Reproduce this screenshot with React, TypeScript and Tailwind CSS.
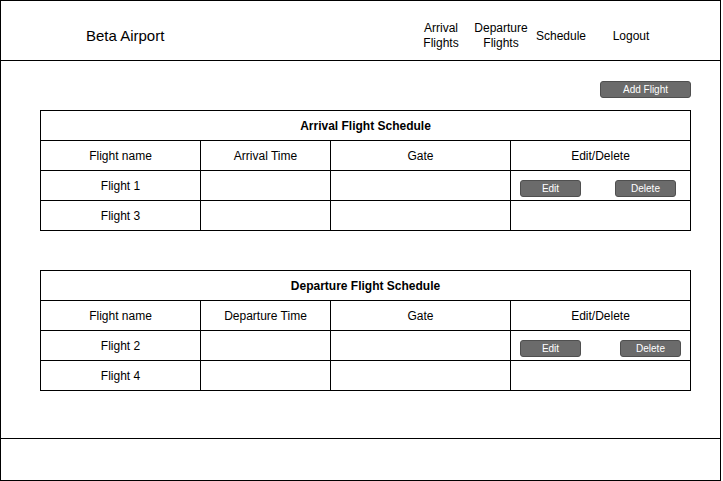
const font = { fontFamily: '"Liberation Sans", Arial, sans-serif' }

type Row = { name: string; actions: boolean }

function SmallButton({ label, className }: { label: string; className?: string }) {
    return (
        <button
            type="button"
            className={`h-[17px] rounded-[3px] border border-[#4f4f4f] bg-[#6b6b6b] pt-[1px] text-[10px] leading-none text-white ${className ?? ""}`}
        >
            {label}
        </button>
    )
}

function ScheduleTable({
    title,
    timeLabel,
    rows,
    deleteMargin,
}: {
    title: string
    timeLabel: string
    rows: Row[]
    deleteMargin: string
}) {
    return (
        <table className="w-[651px] table-fixed border-collapse text-[12px] text-black">
            <colgroup>
                <col className="w-[160px]" />
                <col className="w-[130px]" />
                <col className="w-[180px]" />
                <col className="w-[180px]" />
            </colgroup>
            <tbody>
                <tr className="h-[30px]">
                    <td colSpan={4} className="border border-black text-center font-bold">
                        {title}
                    </td>
                </tr>
                <tr className="h-[30px]">
                    <td className="border border-black text-center">Flight name</td>
                    <td className="border border-black text-center">{timeLabel}</td>
                    <td className="border border-black text-center">Gate</td>
                    <td className="border border-black text-center">Edit/Delete</td>
                </tr>
                {rows.map((row) => (
                    <tr key={row.name} className="h-[30px]">
                        <td className="border border-black text-center">{row.name}</td>
                        <td className="border border-black" />
                        <td className="border border-black" />
                        <td className="border border-black p-0">
                            {row.actions && (
                                <div className="flex items-center pl-[9px] pt-[5px]">
                                    <SmallButton label="Edit" className="w-[61px]" />
                                    <SmallButton label="Delete" className={`w-[61px] ${deleteMargin}`} />
                                </div>
                            )}
                        </td>
                    </tr>
                ))}
            </tbody>
        </table>
    )
}

export default function App() {
    return (
        <div style={font} className="flex h-[481px] w-[721px] flex-col border border-black bg-white text-black">
            {/* Header */}
            <header className="flex h-[60px] items-center border-b border-black pl-[85px] pr-[59px] pt-[11px]">
                <span className="text-[15px]">Beta Airport</span>
                <nav className="ml-auto flex items-center text-[12px] leading-[15px]">
                    <span className="w-[60px] text-center">Arrival<br />Flights</span>
                    <span className="w-[60px] text-center">Departure<br />Flights</span>
                    <span className="w-[60px] text-center">Schedule</span>
                    <span className="ml-[10px] w-[60px] text-center">Logout</span>
                </nav>
            </header>

            {/* Main */}
            <main className="flex flex-1 flex-col border-b border-black pl-[39px] pt-[20px]">
                <div className="flex w-[651px] justify-end">
                    <SmallButton label="Add Flight" className="w-[91px]" />
                </div>
                <div className="mt-[12px]">
                    <ScheduleTable
                        title="Arrival Flight Schedule"
                        timeLabel="Arrival Time"
                        deleteMargin="ml-[34px]"
                        rows={[
                            { name: "Flight 1", actions: true },
                            { name: "Flight 3", actions: false },
                        ]}
                    />
                </div>
                <div className="mt-[39px]">
                    <ScheduleTable
                        title="Departure Flight Schedule"
                        timeLabel="Departure Time"
                        deleteMargin="ml-[39px]"
                        rows={[
                            { name: "Flight 2", actions: true },
                            { name: "Flight 4", actions: false },
                        ]}
                    />
                </div>
            </main>

            {/* Footer */}
            <footer className="h-[41px]" />
        </div>
    )
}
